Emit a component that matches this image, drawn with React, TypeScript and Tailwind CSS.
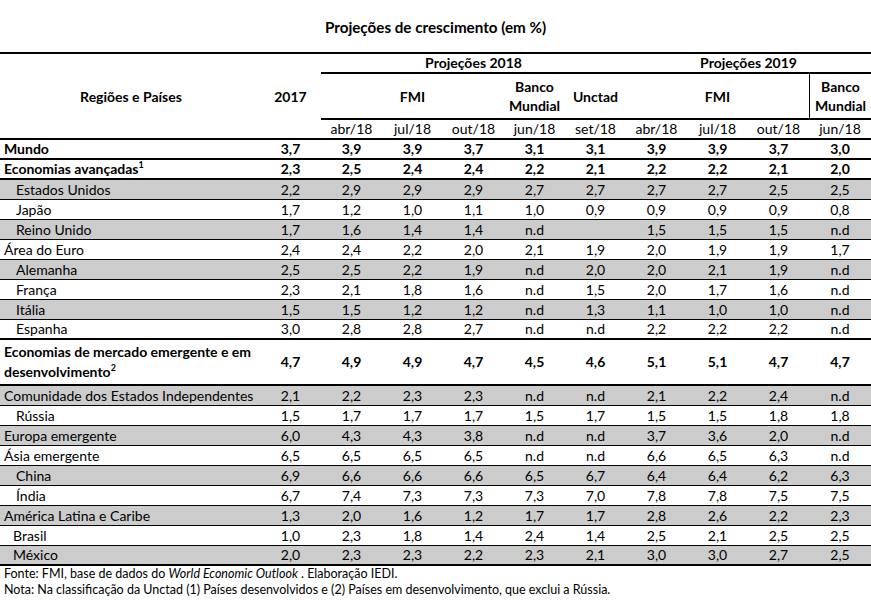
import React from "react";

type Row = {
  label: React.ReactNode;
  v: string[];
  gray?: boolean;
  bold?: boolean;
  indent?: "none" | "sm" | "md";
  border?: 1 | 2;
  tall?: boolean;
};

const Sup = ({ children }: { children: React.ReactNode }) => (
  <sup className="text-[9px] relative -top-[6px] align-baseline">{children}</sup>
);

const rows: Row[] = [
  { label: "Mundo", v: ["3,7", "3,9", "3,9", "3,7", "3,1", "3,1", "3,9", "3,9", "3,7", "3,0"], bold: true, border: 2 },
  {
    label: (
      <>
        Economias avançadas<Sup>1</Sup>
      </>
    ),
    v: ["2,3", "2,5", "2,4", "2,4", "2,2", "2,1", "2,2", "2,2", "2,1", "2,0"],
    bold: true,
    border: 2,
  },
  { label: "Estados Unidos", v: ["2,2", "2,9", "2,9", "2,9", "2,7", "2,7", "2,7", "2,7", "2,5", "2,5"], gray: true, indent: "md" },
  { label: "Japão", v: ["1,7", "1,2", "1,0", "1,1", "1,0", "0,9", "0,9", "0,9", "0,9", "0,8"], indent: "md" },
  { label: "Reino Unido", v: ["1,7", "1,6", "1,4", "1,4", "n.d", "", "1,5", "1,5", "1,5", "n.d"], gray: true, indent: "md" },
  { label: "Área do Euro", v: ["2,4", "2,4", "2,2", "2,0", "2,1", "1,9", "2,0", "1,9", "1,9", "1,7"] },
  { label: "Alemanha", v: ["2,5", "2,5", "2,2", "1,9", "n.d", "2,0", "2,0", "2,1", "1,9", "n.d"], gray: true, indent: "md" },
  { label: "França", v: ["2,3", "2,1", "1,8", "1,6", "n.d", "1,5", "2,0", "1,7", "1,6", "n.d"], indent: "md" },
  { label: "Itália", v: ["1,5", "1,5", "1,2", "1,2", "n.d", "1,3", "1,1", "1,0", "1,0", "n.d"], gray: true, indent: "md" },
  { label: "Espanha", v: ["3,0", "2,8", "2,8", "2,7", "n.d", "n.d", "2,2", "2,2", "2,2", "n.d"], indent: "md", border: 2 },
  {
    label: (
      <>
        Economias de mercado emergente e em
        <br />
        desenvolvimento<Sup>2</Sup>
      </>
    ),
    v: ["4,7", "4,9", "4,9", "4,7", "4,5", "4,6", "5,1", "5,1", "4,7", "4,7"],
    bold: true,
    border: 2,
    tall: true,
  },
  { label: "Comunidade dos Estados Independentes", v: ["2,1", "2,2", "2,3", "2,3", "n.d", "n.d", "2,1", "2,2", "2,4", "n.d"], gray: true },
  { label: "Rússia", v: ["1,5", "1,7", "1,7", "1,7", "1,5", "1,7", "1,5", "1,5", "1,8", "1,8"], indent: "md" },
  { label: "Europa emergente", v: ["6,0", "4,3", "4,3", "3,8", "n.d", "n.d", "3,7", "3,6", "2,0", "n.d"], gray: true },
  { label: "Ásia emergente", v: ["6,5", "6,5", "6,5", "6,5", "n.d", "n.d", "6,6", "6,5", "6,3", "n.d"] },
  { label: "China", v: ["6,9", "6,6", "6,6", "6,6", "6,5", "6,7", "6,4", "6,4", "6,2", "6,3"], gray: true, indent: "md" },
  { label: "Índia", v: ["6,7", "7,4", "7,3", "7,3", "7,3", "7,0", "7,8", "7,8", "7,5", "7,5"], indent: "md" },
  { label: "América Latina e Caribe", v: ["1,3", "2,0", "1,6", "1,2", "1,7", "1,7", "2,8", "2,6", "2,2", "2,3"], gray: true },
  { label: "Brasil", v: ["1,0", "2,3", "1,8", "1,4", "2,4", "1,4", "2,5", "2,1", "2,5", "2,5"], indent: "sm" },
  { label: "México", v: ["2,0", "2,3", "2,3", "2,2", "2,3", "2,1", "3,0", "3,0", "2,7", "2,5"], gray: true, indent: "sm", border: 2 },
];

const grid = "grid grid-cols-[260px_61px_61px_61px_61px_61px_61px_61px_61px_61px_62px]";

function BodyRow({ r }: { r: Row }) {
  const h = r.tall ? "h-[46px]" : "h-[20px]";
  const b = r.border === 2 ? "border-b-2" : "border-b";
  const bg = r.gray ? "bg-[#cccccc]" : "bg-white";
  const w = r.bold ? "font-bold" : "font-normal";
  const pl = r.indent === "md" ? "pl-[16px]" : r.indent === "sm" ? "pl-[13px]" : "pl-[4px]";
  return (
    <div className={`${grid} ${h} ${b} ${bg} ${w} border-black box-border items-center`}>
      <div className={`${pl} whitespace-nowrap ${r.tall ? "leading-[20px]" : "leading-[18px]"}`}>{r.label}</div>
      {r.v.map((x, i) => (
        <div key={i} className="text-center leading-[18px]">
          {x}
        </div>
      ))}
    </div>
  );
}

export default function App() {
  return (
    <div className="w-[871px] bg-white text-black font-['Lato',sans-serif] text-[14px]">
      <div className="h-[52px] pt-[17px] text-center font-bold text-[15.2px] leading-[20px]">
        Projeções de crescimento (em %)
      </div>
      <div className="border-t-2 border-b-2 border-black">
        <div className={`${grid} grid-rows-[20px_46px_18px] font-bold`}>
          <div className="row-span-3 flex items-center justify-center pl-[2px]">Regiões e Países</div>
          <div className="row-span-3 flex items-center justify-center">2017</div>
          <div className="col-span-5 border-b-2 border-black flex items-center justify-center leading-[18px]">
            Projeções 2018
          </div>
          <div className="col-span-4 border-b-2 border-black flex items-center justify-center leading-[18px]">
            Projeções 2019
          </div>
          <div className="col-span-3 border-b-2 border-black flex items-center justify-center">FMI</div>
          <div className="border-b-2 border-black flex items-center justify-center text-center leading-[19px]">
            Banco
            <br />
            Mundial
          </div>
          <div className="border-b-2 border-black flex items-center justify-center">Unctad</div>
          <div className="col-span-3 border-b-2 border-black flex items-center justify-center">FMI</div>
          <div className="border-b-2 border-l border-black flex items-center justify-center text-center leading-[19px]">
            Banco
            <br />
            Mundial
          </div>
          {["abr/18", "jul/18", "out/18", "jun/18", "set/18", "abr/18", "jul/18", "out/18", "jun/18"].map((m, i) => (
            <div key={i} className="font-normal text-center leading-[18px]">
              {m}
            </div>
          ))}
        </div>
      </div>
      {rows.map((r, i) => (
        <BodyRow key={i} r={r} />
      ))}
      <div className="pl-[4px] text-[12.5px] leading-[16px]">
        Fonte: FMI, base de dados do <i>World Economic Outlook</i> . Elaboração IEDI.
      </div>
      <div className="pl-[4px] text-[12.5px] leading-[16px]">
        Nota: Na classificação da Unctad (1) Países desenvolvidos e (2) Países em desenvolvimento, que exclui a Rússia.
      </div>
    </div>
  );
}
